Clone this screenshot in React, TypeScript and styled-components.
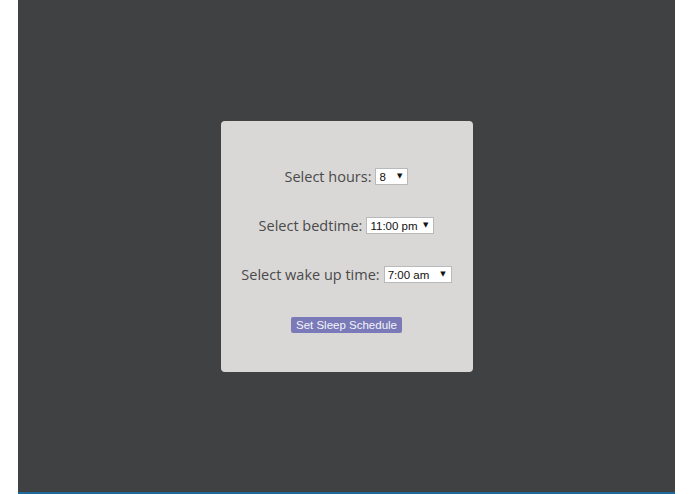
import React from 'react';
import styled, { createGlobalStyle } from 'styled-components';

const GlobalStyle = createGlobalStyle`
  html, body {
    margin: 0;
    padding: 0;
    background: #ffffff;
  }
`;

const Page = styled('div')`
  margin: 0 20px 0 18px;
  height: 492px;
  background: #404142;
  border-bottom: 2px solid #1f6a9a;
  display: flex;
  align-items: center;
  justify-content: center;
`;

const Card = styled('div')`
  width: 252px;
  height: 251px;
  box-sizing: border-box;
  background: #d9d8d7;
  border-radius: 4px;
  padding-top: 46px;
  display: flex;
  flex-direction: column;
  align-items: center;
  gap: 29px;
`;

const Row = styled('label')`
  display: flex;
  align-items: center;
  gap: 4px;
  font-family: 'Open Sans', sans-serif;
  font-size: 14.5px;
  line-height: 20px;
  color: #4a4a4a;
  white-space: nowrap;
`;

const SelectWrap = styled('span')`
  position: relative;
  display: inline-flex;
`;

const Select = styled('select')<{ $width: number }>`
  appearance: none;
  -webkit-appearance: none;
  width: ${(p) => p.$width}px;
  height: 17px;
  box-sizing: border-box;
  border: 1px solid #b9b9b9;
  border-radius: 0;
  background: #ffffff;
  padding: 0 0 0 3px;
  font-family: 'Liberation Sans', Arial, sans-serif;
  font-size: 11.5px;
  color: #111;
  outline: none;
`;

const Arrow = styled('span')`
  position: absolute;
  right: 6px;
  top: 4px;
  font-family: 'DejaVu Sans', sans-serif;
  font-size: 7px;
  line-height: 9px;
  color: #111;
  pointer-events: none;
`;

const Button = styled('button')`
  margin-top: 3px;
  border: none;
  border-radius: 2px;
  background: #7a7ab8;
  color: #f4f4fb;
  font-family: 'Liberation Sans', Arial, sans-serif;
  font-size: 11.5px;
  line-height: 16px;
  height: 16px;
  padding: 0 5px;
  cursor: pointer;
`;

interface DropdownProps {
  value: string;
  options: string[];
  width: number;
}

const Dropdown: React.FC<DropdownProps> = ({ value, options, width }) => (
  <SelectWrap>
    <Select $width={width} defaultValue={value}>
      {options.map((o) => (
        <option key={o} value={o}>
          {o}
        </option>
      ))}
    </Select>
    <Arrow>▼</Arrow>
  </SelectWrap>
);

const hours = ['4', '5', '6', '7', '8', '9', '10'];
const bedtimes = ['9:00 pm', '10:00 pm', '11:00 pm', '12:00 am'];
const wakeTimes = ['5:00 am', '6:00 am', '7:00 am', '8:00 am'];

export default function App() {
  return (
    <>
      <GlobalStyle />
      <Page>
        <Card>
          <Row>
            Select hours: <Dropdown value="8" options={hours} width={33} />
          </Row>
          <Row>
            Select bedtime: <Dropdown value="11:00 pm" options={bedtimes} width={68} />
          </Row>
          <Row>
            Select wake up time: <Dropdown value="7:00 am" options={wakeTimes} width={68} />
          </Row>
          <Button>Set Sleep Schedule</Button>
        </Card>
      </Page>
    </>
  );
}
